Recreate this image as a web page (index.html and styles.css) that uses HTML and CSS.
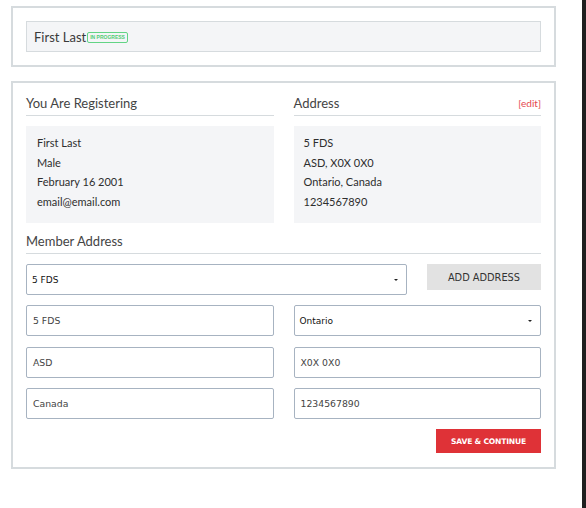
FILE: index.html
```html
<!DOCTYPE html>
<html>
<head>
<meta charset="utf-8">
<link rel="stylesheet" href="styles.css">
</head>
<body>
<div class="page">
  <div class="main">
    <div class="card card-top">
      <div class="name-bar">
        <span class="name">First Last</span><span class="badge">IN PROGRESS</span>
      </div>
    </div>
    <div class="card card-main">
      <div class="two-col">
        <div class="col">
          <div class="heading"><span>You Are Registering</span></div>
          <div class="info-box">
            <div>First Last</div>
            <div>Male</div>
            <div>February 16 2001</div>
            <div>email@email.com</div>
          </div>
        </div>
        <div class="col">
          <div class="heading"><span>Address</span><span class="edit">[edit]</span></div>
          <div class="info-box">
            <div>5 FDS</div>
            <div>ASD, X0X 0X0</div>
            <div>Ontario, Canada</div>
            <div>1234567890</div>
          </div>
        </div>
      </div>
      <div class="heading heading-member"><span>Member Address</span></div>
      <div class="select-row">
        <div class="field select">5 FDS<span class="caret"></span></div>
        <div class="btn-grey">ADD ADDRESS</div>
      </div>
      <div class="fields">
        <div class="field">5 FDS</div>
        <div class="field select">Ontario<span class="caret"></span></div>
        <div class="field">ASD</div>
        <div class="field">X0X 0X0</div>
        <div class="field">Canada</div>
        <div class="field">1234567890</div>
      </div>
      <div class="actions">
        <div class="btn-red">SAVE &amp; CONTINUE</div>
      </div>
    </div>
  </div>
  <div class="strip"></div>
</div>
</body>
</html>
```
FILE: styles.css
```css
html, body {
  margin: 0;
  padding: 0;
  background: #ffffff;
}
body {
  font-family: "Lato", "Noto Sans", sans-serif;
  color: #333;
}
.page {
  display: flex;
  width: 586px;
  height: 508px;
  overflow: hidden;
}
.main {
  width: 582px;
  box-sizing: border-box;
  padding: 6px 26px 0 11px;
}
.strip {
  width: 4px;
  background: #1f1f1f;
  height: 508px;
}
.card {
  border: 2px solid #d6dbde;
  padding: 13px;
}
.card-main {
  margin-top: 14px;
  padding-top: 13px;
  padding-bottom: 14px;
}
.name-bar {
  height: 29px;
  border: 1px solid #d6dbde;
  background: #f4f5f7;
  display: flex;
  align-items: center;
  padding-left: 7px;
}
.name {
  font-size: 13px;
  color: #3a3a3a;
}
.badge {
  font-family: "Liberation Sans", sans-serif;
  font-size: 5px;
  font-weight: bold;
  color: #52cc75;
  border: 1px solid #62d485;
  border-radius: 2px;
  padding: 2px 2px;
  line-height: 5px;
  margin-left: 1px;
  margin-top: 1px;
}
.two-col {
  display: grid;
  grid-template-columns: 1fr 1fr;
  column-gap: 20px;
}
.heading {
  display: flex;
  justify-content: space-between;
  align-items: center;
  height: 15px;
  font-size: 13px;
  line-height: 15px;
  color: #444;
  border-bottom: 1px solid #d6dbde;
  padding-bottom: 4px;
}
.edit {
  font-size: 10px;
  line-height: 15px;
  color: #e5474d;
}
.info-box {
  margin-top: 10px;
  background: #f4f5f7;
  padding: 7px 11px 12px;
  font-size: 11px;
  line-height: 19.5px;
  color: #2e2e2e;
}
.col:last-child .info-box {
  padding-left: 10px;
}
.heading-member {
  margin-top: 11px;
}
.select-row {
  margin-top: 10px;
  display: grid;
  grid-template-columns: 1fr 114px;
  column-gap: 20px;
  align-items: start;
}
.field {
  box-sizing: border-box;
  height: 31px;
  border: 1px solid #a7b3c1;
  border-radius: 2px;
  padding-left: 6px;
  display: flex;
  align-items: center;
  font-family: "DejaVu Sans", sans-serif;
  font-size: 9.3px;
  color: #444;
  position: relative;
}
.select {
  padding-left: 5px;
  color: #111;
  font-size: 9px;
}
.caret {
  position: absolute;
  right: 8px;
  top: 14px;
  width: 0;
  height: 0;
  border-left: 2px solid transparent;
  border-right: 2px solid transparent;
  border-top: 2px solid #222;
}
.btn-grey {
  height: 26px;
  background: #e2e2e2;
  display: flex;
  align-items: center;
  justify-content: center;
  font-family: "DejaVu Sans", sans-serif;
  font-size: 9.8px;
  color: #333;
}
.fields {
  margin-top: 10px;
  display: grid;
  grid-template-columns: 1fr 1fr;
  column-gap: 20px;
  row-gap: 10.5px;
}
.actions {
  display: flex;
  justify-content: flex-end;
  margin-top: 10px;
}
.btn-red {
  width: 105px;
  height: 24px;
  background: #df3237;
  color: #fff;
  display: flex;
  align-items: center;
  justify-content: center;
  font-family: "DejaVu Sans", sans-serif;
  font-weight: bold;
  font-size: 7.6px;
  letter-spacing: -0.2px;
}
```
